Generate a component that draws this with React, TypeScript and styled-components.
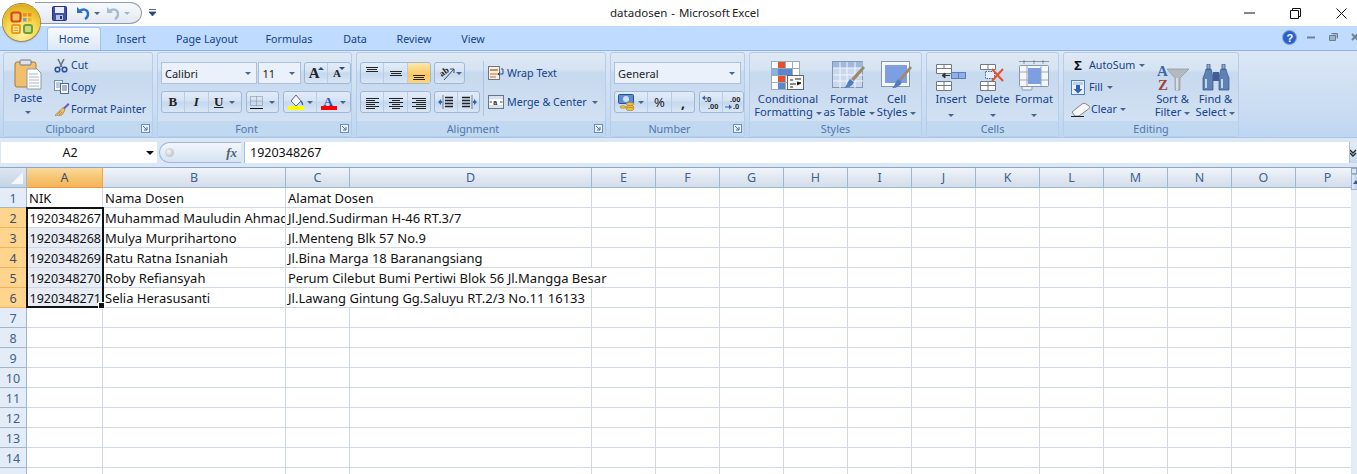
import React from 'react';
import styled, { createGlobalStyle } from 'styled-components';

const Global = createGlobalStyle`
  html, body { margin: 0; padding: 0; background: #fff; }
  body { font-family: "Noto Sans", "Open Sans", sans-serif; color: #15428b; }
`;

const Window = styled.div`
  width: 1357px;
  height: 474px;
  overflow: hidden;
  position: relative;
  background: #fff;
`;

/* title bar */
const TitleBar = styled.div`
  height: 26px;
  display: flex;
  align-items: center;
  background: #fff;
  padding-left: 35px;
`;

const Qat = styled.div`
  width: 107px;
  height: 22px;
  box-sizing: border-box;
  border: 1px solid #8e9bb0;
  border-left: none;
  border-radius: 0 12px 12px 0 / 0 11px 11px 0;
  background: linear-gradient(#f7f9fc, #e3e9f2);
  display: flex;
  align-items: center;
  padding-left: 17px;
  gap: 2px;
`;

const QatCustomize = styled.div`
  margin-left: 3px;
  width: 14px;
  display: flex;
  justify-content: center;
`;

const TitleText = styled.div`
  position: absolute;
  left: 610px;
  top: 4px;
  font-size: 11.5px;
  line-height: 18px;
  word-spacing: -1px;
  color: #222;
  white-space: pre;
`;

const WindowButtons = styled.div`
  margin-left: auto;
  margin-right: -7px;
  display: flex;
`;

const WinBtn = styled.div`
  width: 46px;
  height: 24px;
  display: flex;
  align-items: center;
  justify-content: center;
`;

const TabBtn = styled.div`
  width: 22px;
  height: 22px;
  display: flex;
  align-items: center;
  justify-content: center;
`;

const HelpWrap = styled.div`
  margin-right: 3px;
`;

const Orb = styled.div`
  position: absolute;
  z-index: 2;
  left: 3px;
  top: 4px;
  width: 37px;
  height: 37px;
  border-radius: 50%;
  background: radial-gradient(circle at 50% 78%, #fff2b0 0%, #f9d84f 45%, #e0b01e 78%, #bd911c 100%);
  box-shadow: 0 0 0 1px #a98a3a, 0 1px 2px rgba(60, 60, 60, .5);
  display: flex;
  align-items: center;
  justify-content: center;
`;

/* tabs */
const TabRow = styled.div`
  height: 24px;
  background: #bfdbff;
  display: flex;
  align-items: flex-end;
  padding-left: 47px;
  position: relative;
`;

const Tab = styled.div<{ $w: number; $active?: boolean }>`
  width: ${p => p.$w}px;
  height: 23px;
  box-sizing: border-box;
  font-size: 10.7px;
  line-height: 25px;
  text-align: center;
  color: #15428b;
  ${p => p.$active && `
    background: linear-gradient(#f6fafe, #dce8f6);
    border: 1px solid #a5c3e6;
    border-bottom: none;
    border-radius: 3px 3px 0 0;
    line-height: 23px;
  `}
`;

const TabRight = styled.div`
  position: absolute;
  right: -9px;
  top: 0;
  height: 22px;
  display: flex;
  align-items: center;
`;

/* ribbon */
const Ribbon = styled.div`
  height: 88px;
  box-sizing: border-box;
  background: linear-gradient(#dbe7f6, #c9dcf2 70%, #bed6f3);
  border-top: 1px solid #8db2e3;
  border-bottom: 1px solid #a6c9e8;
  display: flex;
  gap: 4px;
  padding: 1px 0 0 3px;
`;

const Group = styled.div<{ $w: number }>`
  width: ${p => p.$w}px;
  height: 85px;
  box-sizing: border-box;
  border: 1px solid #b5cde8;
  border-radius: 3px;
  background: linear-gradient(#dfe9f5 0%, #d6e3f2 20%, #c7d9ee 24%, #d5e4f5 100%);
  display: flex;
  flex-direction: column;
  position: relative;
`;

const GroupBody = styled.div<{ $pl?: number }>`
  height: 68px;
  display: flex;
  padding-left: ${p => p.$pl ?? 3}px;
`;

const GroupStack = styled.div`
  height: 68px;
  box-sizing: border-box;
  display: flex;
  flex-direction: column;
  gap: 7px;
  padding: 9px 0 0 3px;
`;

const GroupLabel = styled.div<{ $launcher?: boolean }>`
  height: 15px;
  background: #c1d8f1;
  font-size: 10.8px;
  line-height: 15px;
  text-align: center;
  color: #4f77ab;
  border-radius: 0 0 3px 3px;
  padding-right: ${p => p.$launcher ? 16 : 0}px;
`;

const Launcher = styled.div`
  position: absolute;
  right: 2px;
  bottom: 3px;
  width: 9px;
  height: 9px;
  box-sizing: border-box;
  border: 1px solid #6f8fb8;
  background: #e8f0fa;
  display: flex;
`;

const BigButton = styled.div<{ $w: number; $pt?: number }>`
  width: ${p => p.$w}px;
  padding-top: ${p => p.$pt ?? 0}px;
  display: flex;
  flex-direction: column;
  align-items: center;
  font-size: 11.2px;
  line-height: 13px;
  color: #15428b;
  text-align: center;
  white-space: nowrap;
`;

const BigIcon = styled.div<{ $h?: number }>`
  height: ${p => p.$h ?? 38}px;
  display: flex;
  align-items: flex-end;
  justify-content: center;
  margin-bottom: 1px;
`;

const Col = styled.div<{ $gap?: number; $pt?: number; $w?: number; $ml?: number }>`
  display: flex;
  flex-direction: column;
  gap: ${p => p.$gap ?? 0}px;
  padding-top: ${p => p.$pt ?? 0}px;
  margin-left: ${p => p.$ml ?? 0}px;
  ${p => p.$w ? `width: ${p.$w}px;` : ''}
`;

const Row = styled.div<{ $gap?: number; $ml?: number }>`
  display: flex;
  align-items: center;
  gap: ${p => p.$gap ?? 0}px;
  margin-left: ${p => p.$ml ?? 0}px;
`;

const SmallItem = styled.div<{ $gap?: number }>`
  height: 22px;
  display: flex;
  align-items: center;
  gap: ${p => p.$gap ?? 3}px;
  font-size: 10.7px;
  color: #15428b;
  white-space: nowrap;
`;

const SigmaGlyph = styled.span`
  width: 14px;
  color: #111;
  font-weight: 700;
  font-size: 13px;
  text-align: center;
`;

const Combo = styled.div<{ $w: number }>`
  width: ${p => p.$w}px;
  height: 22px;
  box-sizing: border-box;
  background: #eaf1fa;
  border: 1px solid #abc1de;
  display: flex;
  align-items: center;
  justify-content: space-between;
  padding: 0 5px 0 3px;
  font-size: 11px;
  color: #222;
`;

const BtnGroup = styled.div<{ $ml?: number }>`
  height: 22px;
  box-sizing: border-box;
  display: flex;
  margin-left: ${p => p.$ml ?? 0}px;
  border: 1px solid #9fb8d8;
  border-radius: 3px;
  background: linear-gradient(#e3edf9, #d4e2f3 45%, #c5d8ee 50%, #d9e6f6);
  overflow: hidden;
`;

const Seg = styled.div<{ $w: number; $on?: boolean; $sep?: boolean; $gap?: number }>`
  width: ${p => p.$w}px;
  display: flex;
  align-items: center;
  justify-content: center;
  gap: ${p => p.$gap ?? 3}px;
  font-size: 13px;
  color: #222;
  ${p => p.$sep && 'border-left: 1px solid #b9cde6;'}
  ${p => p.$on && 'background: linear-gradient(#fde7ab, #fbc85e 60%, #fdd67d);'}
`;

const SerifGlyph = styled.span<{ $size: number; $italic?: boolean; $under?: boolean }>`
  font-family: "Liberation Serif", serif;
  font-weight: 700;
  font-size: ${p => p.$size}px;
  ${p => p.$italic ? 'font-style: italic;' : ''}
  ${p => p.$under ? 'text-decoration: underline;' : ''}
`;

const MiniTriangle = styled.span<{ $down?: boolean }>`
  align-self: flex-start;
  margin: 4px 0 0 -2px;
  width: 0;
  height: 0;
  border-left: 3px solid transparent;
  border-right: 3px solid transparent;
  ${p => p.$down ? 'border-top: 3px solid #2c4a78;' : 'border-bottom: 3px solid #2c4a78;'}
`;

const BoldMark = styled.span<{ $size: number }>`
  font-weight: 700;
  font-size: ${p => p.$size}px;
`;

const VSep = styled.div`
  width: 1px;
  height: 55px;
  margin: 8px 4px 0 3px;
  background: #aec4df;
`;

const Caret = styled.span<{ $c?: string; $mt?: number; $ml?: number }>`
  display: inline-block;
  width: 0;
  height: 0;
  border-left: 3px solid transparent;
  border-right: 3px solid transparent;
  border-top: 3px solid ${p => p.$c ?? '#46648c'};
  vertical-align: middle;
  margin-top: ${p => p.$mt ?? 0}px;
  margin-left: ${p => p.$ml ?? 0}px;
`;

/* formula bar */
const FormulaBar = styled.div`
  height: 30px;
  box-sizing: border-box;
  background: #dbe7f5;
  border-bottom: 1px solid #8aa7c6;
  padding: 4px 0 4px 0;
  display: flex;
  align-items: stretch;
`;

const NameBox = styled.div`
  width: 156px;
  margin-left: 1px;
  background: #fff;
  position: relative;
  font-size: 12.5px;
  line-height: 22px;
  color: #111;
  text-align: center;
  padding-right: 18px;
  box-sizing: border-box;
`;

const NameCaret = styled.div`
  position: absolute;
  right: 3px;
  top: 9px;
  width: 0;
  height: 0;
  border-left: 4px solid transparent;
  border-right: 4px solid transparent;
  border-top: 4px solid #111;
`;

const FxBox = styled.div`
  width: 82px;
  margin-left: 2px;
  border-radius: 11px 0 0 11px;
  border: 1px solid #9db7d6;
  border-right: none;
  background: linear-gradient(#f2f6fb, #d5e3f3);
  display: flex;
  align-items: center;
  justify-content: space-between;
  padding: 0 4px 0 5px;
  box-sizing: border-box;
`;

const FxDot = styled.div`
  width: 9px;
  height: 9px;
  border-radius: 50%;
  background: radial-gradient(circle at 40% 40%, #f4f4f4, #a9b1bb);
`;

const FxLabel = styled.div`
  font-family: "Liberation Serif", serif;
  font-style: italic;
  font-weight: 700;
  font-size: 13px;
  color: #55606c;
`;

const FormulaInput = styled.div`
  flex: 1;
  margin-left: 3px;
  background: #fff;
  border: 1px solid #a8bfd9;
  border-width: 0 1px;
  font-size: 12.5px;
  line-height: 22px;
  color: #111;
  padding-left: 5px;
`;

const FormulaExpand = styled.div`
  width: 7px;
  background: linear-gradient(#e3edf8, #c6d8ee);
  overflow: hidden;
  display: flex;
  align-items: center;
`;

/* sheet */
const SheetArea = styled.div`
  display: flex;
  height: 306px;
`;

const Sheet = styled.div`
  width: 1351px;
  overflow: hidden;
  display: grid;
  grid-template-columns: 27px 76px 183px 64px 242px repeat(12, 64px);
  grid-template-rows: 20px;
  grid-auto-rows: 20px;
  position: relative;
  background: #fff;
`;

const Corner = styled.div`
  background: linear-gradient(#dde6f1, #c3d3e6);
  border-right: 1px solid #9eb6ce;
  border-bottom: 1px solid #9eb6ce;
  box-sizing: border-box;
  position: relative;
`;

const CornerMark = styled.div`
  position: absolute;
  right: 3px;
  bottom: 3px;
  width: 0;
  height: 0;
  border-left: 12px solid transparent;
  border-bottom: 12px solid #f5f8fb;
`;

const ColHead = styled.div<{ $on?: boolean }>`
  box-sizing: border-box;
  background: ${p => p.$on
    ? 'linear-gradient(#f9d99f, #f7c572 50%, #f4b45a)'
    : 'linear-gradient(#f1f5fa, #dfe7f1 55%, #d3deeb)'};
  border-right: 1px solid ${p => p.$on ? '#f2a83f' : '#9eb6ce'};
  border-bottom: 1px solid ${p => p.$on ? '#f29536' : '#9eb6ce'};
  font-size: 12.5px;
  line-height: 20px;
  text-align: center;
  color: ${p => p.$on ? '#3a4f6c' : '#3f628e'};
`;

const RowHead = styled.div<{ $on?: boolean }>`
  box-sizing: border-box;
  background: ${p => p.$on ? '#ffd58d' : '#e4ecf7'};
  border-right: 1px solid ${p => p.$on ? '#f29536' : '#9eb6ce'};
  border-bottom: 1px solid ${p => p.$on ? '#f2b45f' : '#9eb6ce'};
  font-size: 12.5px;
  line-height: 21px;
  text-align: center;
  color: ${p => p.$on ? '#3a4f6c' : '#3f628e'};
`;

const Cell = styled.div<{ $num?: boolean; $span?: number; $sel?: boolean }>`
  box-sizing: border-box;
  border-right: 1px solid #d0d7e5;
  border-bottom: 1px solid #d0d7e5;
  font-size: ${p => p.$num ? 12.5 : 13}px;
  line-height: 21px;
  color: #111;
  padding: 0 ${p => p.$num ? 1 : 0}px 0 2px;
  white-space: nowrap;
  overflow: hidden;
  text-align: ${p => p.$num ? 'right' : 'left'};
  ${p => p.$span ? `grid-column: span ${p.$span};` : ''}
  ${p => p.$sel ? 'background: #e8ecf5;' : ''}
`;

const Selection = styled.div`
  position: absolute;
  left: 26px;
  top: 39px;
  width: 78px;
  height: 101px;
  box-sizing: border-box;
  border: 2px solid #111;
  pointer-events: none;
`;

const FillHandle = styled.div`
  position: absolute;
  right: -3px;
  bottom: -3px;
  width: 5px;
  height: 5px;
  background: #111;
  border: 1px solid #fff;
`;

const ScrollTrack = styled.div`
  width: 6px;
  background: #e3edf8;
  overflow: hidden;
  display: flex;
  flex-direction: column;
`;

const ScrollSplit = styled.div`
  height: 6px;
  background: #dbe6f3;
  border: 1px solid #8fa8c6;
  box-sizing: border-box;
`;

const ScrollBtn = styled.div`
  height: 16px;
  background: linear-gradient(90deg, #dfe9f6, #bcd0e8);
  border: 1px solid #9db7d6;
  border-right: none;
  box-sizing: border-box;
  display: flex;
  align-items: center;
  padding-left: 1px;
`;

const ScrollUp = styled.div`
  width: 0;
  height: 0;
  border-left: 3px solid transparent;
  border-right: 3px solid transparent;
  border-bottom: 4px solid #3e5a80;
`;

/* icons */
const SvgBox = styled.svg`
  display: block;
  flex: none;
`;

const Svg = ({ w, h, children }: { w: number; h: number; children: React.ReactNode }) => (
  <SvgBox width={w} height={h} viewBox={`0 0 ${w} ${h}`}>{children}</SvgBox>
);

const OfficeLogo = () => (
  <Svg w={24} h={24}>
    <rect x="1.5" y="1.500" width="9" height="9" rx="2" fill="#f6c35a" stroke="#d9481c" strokeWidth="2.2" />
    <rect x="13" y="2" width="3.500" height="3.500" fill="#ef8a1f" />
    <rect x="18" y="2" width="3.500" height="3.500" fill="#ef8a1f" />
    <rect x="13" y="7" width="3.500" height="3.500" fill="#6f9bd8" />
    <rect x="18" y="7" width="3.500" height="3.500" fill="#f2b12e" />
    <rect x="2" y="14" width="8" height="8" rx="1" fill="#fbe39a" stroke="#ee9a1c" strokeWidth="2" />
    <path d="M4 17h4M4 19.500h4" stroke="#ee9a1c" />
    <rect x="14" y="14" width="8" height="8" rx="2" fill="#c3db8a" stroke="#6fa02f" strokeWidth="2" />
  </Svg>
);

const SaveIcon = () => (
  <Svg w={15} h={15}>
    <rect x=".5" y=".5" width="14" height="14" rx="1" fill="#3f52a5" stroke="#27337a" />
    <rect x="3" y="1" width="9" height="6" fill="#e8eefb" />
    <rect x="4" y="9" width="7" height="5" fill="#b9c3e2" />
    <rect x="8" y="10" width="2" height="3" fill="#27337a" />
  </Svg>
);

const UndoIcon = ({ off }: { off?: boolean }) => {
  const c = off ? '#a5bcd0' : '#2e6fc4';
  return (
    <Svg w={14} h={14}>
      <path d="M1 1v6h6" fill={c} />
      <path d="M3 6c3-4 9-3 9 2 0 2-1 4-3 5" fill="none" stroke={c} strokeWidth="2.4" />
    </Svg>
  );
};

const PasteIcon = () => (
  <Svg w={28} h={31}>
    <rect x="1" y="3" width="21" height="25" rx="2" fill="#f2bf6c" stroke="#a67a3c" />
    <rect x="6" y="1" width="11" height="5" rx="1" fill="#dfe4ea" stroke="#707a86" />
    <path d="M13 10h10l4 4v16H13z" fill="#fff" stroke="#8d99a8" />
    <path d="M15 15h9M15 18h10M15 21h10M15 24h10M15 27h10" stroke="#a9b6c5" />
  </Svg>
);

const CutIcon = () => (
  <Svg w={14} h={15}>
    <path d="M4 1l4 8M10 1L6 9" stroke="#6b7583" strokeWidth="1.6" />
    <circle cx="3.5" cy="11.5" r="2.3" fill="none" stroke="#2c4f9c" strokeWidth="1.6" />
    <circle cx="10.5" cy="11.5" r="2.3" fill="none" stroke="#2c4f9c" strokeWidth="1.6" />
  </Svg>
);

const CopyIcon = () => (
  <Svg w={15} h={14}>
    <rect x=".5" y=".5" width="8" height="10" fill="#fff" stroke="#6f8fb8" />
    <path d="M2 3h5M2 5h5M2 7h5" stroke="#7e93b0" />
    <rect x="6.5" y="3.5" width="8" height="10" fill="#fff" stroke="#4a6a9a" />
    <path d="M8 6h5M8 8h5M8 10h5" stroke="#4a6a9a" />
  </Svg>
);

const BrushIcon = () => (
  <Svg w={16} h={14}>
    <path d="M9 6l5-5 1.5 1.5-5 5z" fill="#6a5acd" />
    <path d="M9 5.5L11 8l-3 5c-2 .8-5 1-7 .4C3 12 5 9 9 5.5z" fill="#e9c36c" stroke="#a67e2c" strokeWidth=".7" />
    <path d="M3 12.5L7 9M5 13l3-3" stroke="#a67e2c" strokeWidth=".7" />
  </Svg>
);

const Lines = ({ a }: { a: 'l' | 'c' | 'r' | 't' | 'm' | 'b' }) => {
  const rows: [number, number, number][] = a === 'l'
    ? [[2, 15, 3], [2, 11, 5], [2, 15, 7], [2, 11, 9], [2, 15, 11], [2, 11, 13]]
    : a === 'c'
      ? [[1, 15, 3], [4, 12, 5], [1, 15, 7], [4, 12, 9], [1, 15, 11], [4, 12, 13]]
      : a === 'r'
        ? [[1, 15, 3], [5, 15, 5], [1, 15, 7], [5, 15, 9], [1, 15, 11], [5, 15, 13]]
        : a === 't'
          ? [[2, 14, 1], [3, 13, 3], [2, 14, 5]]
          : a === 'm'
            ? [[2, 14, 5], [3, 13, 7], [2, 14, 9]]
            : [[2, 14, 9], [3, 13, 11], [2, 14, 13]];
  return (
    <Svg w={16} h={15}>
      {rows.map((r, i) => <path key={i} d={`M${r[0]} ${r[2] + .5}H${r[1]}`} stroke="#222" />)}
    </Svg>
  );
};

const IndentIcon = ({ flip }: { flip?: boolean }) => (
  <Svg w={16} h={15}>
    <g transform={flip ? 'translate(16 0) scale(-1 1)' : undefined}>
      <path d="M7 2.5h8M7 5.5h8M7 8.5h8M7 11.5h8" stroke="#222" strokeWidth="1.4" />
      <path d="M5 .5v14" stroke="#222" strokeDasharray="1 1" />
      <path d="M0 7l3-3v2h1v2H3v2z" fill="#2f63b4" />
    </g>
  </Svg>
);

const TextAngle = () => (
  <Svg w={18} h={16}>
    <text x="2" y="10" fontSize="9" fontWeight="700" fontFamily="Liberation Serif" fill="#222" transform="rotate(-35 6 8)">ab</text>
    <path d="M6 15L16 4M16 4h-4M16 4v4" stroke="#444" fill="none" />
  </Svg>
);

const WrapIcon = () => (
  <Svg w={16} h={14}>
    <rect x=".5" y=".5" width="11" height="13" fill="#f8f2e4" stroke="#6b7583" />
    <path d="M2 4h8" stroke="#c26a2a" strokeWidth="1.5" />
    <path d="M2 8h8M2 11h6" stroke="#c26a2a" />
    <path d="M13 3h2v5h-4M12 6l-2 2 2 2" fill="none" stroke="#2f4f80" />
  </Svg>
);

const MergeIcon = () => (
  <Svg w={16} h={14}>
    <rect x=".5" y=".5" width="15" height="13" fill="#d7e2f0" stroke="#6b7583" />
    <rect x="1" y="4" width="14" height="6" fill="#fff" />
    <text x="5.2" y="9.5" fontSize="7" fontWeight="700" fill="#222" fontFamily="Liberation Sans">a</text>
    <path d="M1.5 7H4M14.5 7H12" stroke="#2f4f80" />
  </Svg>
);

const CurrencyIcon = () => (
  <Svg w={17} h={17}>
    <rect x=".5" y=".5" width="15" height="9" rx="1" fill="#5b8fd0" stroke="#2c4f9c" />
    <ellipse cx="8" cy="5" rx="3" ry="3" fill="#cfe0f5" />
    <ellipse cx="12" cy="10" rx="4" ry="1.6" fill="#f0bf3e" stroke="#a67e2c" strokeWidth=".6" />
    <ellipse cx="12" cy="13" rx="4" ry="1.6" fill="#f0bf3e" stroke="#a67e2c" strokeWidth=".6" />
    <ellipse cx="12" cy="15" rx="4" ry="1.6" fill="#f0bf3e" stroke="#a67e2c" strokeWidth=".6" />
    <ellipse cx="5" cy="13" rx="3" ry="1.3" fill="#f0bf3e" stroke="#a67e2c" strokeWidth=".6" />
  </Svg>
);

const DecimalIcon = ({ more }: { more?: boolean }) => (
  <Svg w={18} h={15}>
    <text x={more ? 3 : 6} y="6.5" fontSize="7.5" fontWeight="700" fill="#222" fontFamily="Liberation Sans">{more ? '.0' : '.00'}</text>
    <text x={more ? 6 : 9} y="14" fontSize="7.5" fontWeight="700" fill="#222" fontFamily="Liberation Sans">{more ? '.00' : '.0'}</text>
    <path d={more ? 'M0 3l3-2.5v5z' : 'M8 12l-3-2.5v5z'} fill="#2f63b4" />
    <path d={more ? 'M3 3h2' : 'M1 12h4'} stroke="#2f63b4" />
  </Svg>
);

const GridBase = ({ x, y, c, r, s, stroke }: { x: number; y: number; c: number; r: number; s: number; stroke: string }) => (
  <g>
    {Array.from({ length: c * r }).map((_, i) => (
      <rect key={i} x={x + (i % c) * s + .5} y={y + Math.floor(i / c) * s + .5} width={s} height={s} fill="#fff" stroke={stroke} />
    ))}
  </g>
);

const CondIcon = () => (
  <Svg w={34} h={30}>
    <GridBase x={0} y={0} c={4} r={4} s={7} stroke="#9aa9bc" />
    <rect x="7" y="1" width="7" height="6" fill="#e8502a" />
    <rect x="1" y="8" width="6" height="6" fill="#8db0e0" />
    <rect x="7" y="8" width="14" height="6" fill="#5b86d0" />
    <rect x="7" y="15" width="7" height="6" fill="#e8502a" />
    <rect x="7" y="22" width="7" height="6" fill="#5b86d0" />
    <rect x="16.5" y="14.5" width="16" height="14" fill="#f6f6f4" stroke="#5d6670" />
    <path d="M19 19h3M24 18h6M19 23h6M26 21l4 1-4 2M19 26h3" stroke="#222" />
  </Svg>
);

const TableIcon = () => (
  <Svg w={34} h={30}>
    <rect x=".5" y=".5" width="30" height="26" fill="#c9d8ef" stroke="#8897ab" />
    <rect x="1" y="1" width="30" height="6" fill="#9fb8de" />
    <path d="M8 1v26M15 1v26M23 1v26M1 7h30M1 14h30M1 20h30" stroke="#f3f6fb" />
    <path d="M19 18L31 5l2 2-11 13z" fill="#9a8b6a" />
    <path d="M18 18l4 3c-2 4-5 6-10 6 3-2 3-6 6-9z" fill="#4f7fc0" />
  </Svg>
);

const CellStylesIcon = () => (
  <Svg w={32} h={30}>
    <rect x=".5" y=".5" width="28" height="25" fill="#f5f7fb" stroke="#8897ab" />
    <rect x="4" y="4" width="22" height="18" fill="#7d9fe2" />
    <path d="M18 18L29 5l2 2-11 13z" fill="#9a8b6a" />
    <path d="M17 18l4 3c-2 4-5 6-10 6 3-2 3-6 6-9z" fill="#4f7fc0" />
  </Svg>
);

const InsertIcon = () => (
  <Svg w={30} h={27}>
    <path d="M.5 .5h15v9H.5zM.5 4.5h15M8 .5v4" fill="#fff" stroke="#6e7a89" />
    <path d="M.5 17.5h15v9H.5zM.5 21.5h15M8 17.5v9" fill="#fff" stroke="#6e7a89" />
    <rect x="15.5" y="8.5" width="14" height="6" fill="#8fb0e4" stroke="#5c7eb8" />
    <path d="M22.5 8.5v6" stroke="#5c7eb8" />
    <path d="M6 11.5h8M6 11.5l3-2.5v5z" stroke="#333" fill="#333" />
  </Svg>
);

const DeleteIcon = () => (
  <Svg w={26} h={27}>
    <path d="M.5 .5h15v5H.5zM8 .5v5M.5 17.5h15v9H.5zM.5 21.5h15M8 17.5v9" fill="#fff" stroke="#6e7a89" />
    <rect x="5.5" y="7.5" width="9" height="7" fill="#e6eefa" stroke="#3f6db5" strokeDasharray="1.5 1" />
    <path d="M12 5l11 12M23 5L12 17" stroke="#e8502a" strokeWidth="2" />
  </Svg>
);

const FormatIcon = () => (
  <Svg w={30} h={31}>
    <path d="M.5 1.5h29M5 .5v3M24 .5v3M15 .5v3" stroke="#444" strokeDasharray="1 1" />
    <rect x=".5" y="5.5" width="29" height="21" rx="1" fill="#f4f6fa" stroke="#8897ab" />
    <path d="M8 5v21M22 5v21M1 12h28M1 20h28" stroke="#9aa9bc" />
    <rect x="9" y="8" width="13" height="16" fill="#7d9fe2" />
    <rect x="3" y="26.5" width="10" height="3.5" rx="1" fill="#eef1f6" stroke="#8897ab" />
  </Svg>
);

const FillDownIcon = () => (
  <Svg w={14} h={15}>
    <rect x=".5" y=".5" width="13" height="14" fill="#eaf1fb" stroke="#4f7fc0" />
    <rect x="2" y="2" width="10" height="3" fill="#bcd0ec" />
    <path d="M5 5h4v4h2.5L7 13.5 2.5 9H5z" fill="#2f63b4" />
  </Svg>
);

const EraserIcon = () => (
  <Svg w={20} h={15}>
    <path d="M1 10L11 2c1-1 3-1 4 0l3 2c1 1 .5 2-.5 3L8 14H4z" fill="#f6f7f8" stroke="#7d8792" />
    <path d="M0 14.5h13" stroke="#222" />
  </Svg>
);

const SortIcon = () => (
  <Svg w={32} h={28}>
    <text x="0" y="13" fontSize="15" fontWeight="700" fontFamily="Liberation Serif" fill="#3c66b0">A</text>
    <text x="1" y="27" fontSize="15" fontWeight="700" fontFamily="Liberation Serif" fill="#a3403a">Z</text>
    <path d="M10 6h22l-9 9v12h-5V15z" fill="#b4babf" stroke="#848c94" strokeWidth=".6" />
    <path d="M20 15v12" stroke="#e8ebee" strokeWidth="1.5" />
  </Svg>
);

const FindIcon = () => (
  <Svg w={28} h={27}>
    <path d="M3 9l1-4h5l1 4 1 5v12H1V14z" fill="#5f82b4" stroke="#34517f" strokeWidth=".7" />
    <path d="M18 9l1-4h5l1 4 2 5v12H17V14z" fill="#5f82b4" stroke="#34517f" strokeWidth=".7" />
    <path d="M5 0h3v5H5zM20 0h3v5h-3z" fill="#8da9cf" stroke="#34517f" strokeWidth=".7" />
    <rect x="11" y="8" width="6" height="9" fill="#3e5f90" />
    <path d="M4 15v9M20 15v9" stroke="#c6d6ea" strokeWidth="2" />
  </Svg>
);

const HelpIcon = () => (
  <Svg w={15} h={15}>
    <circle cx="7.5" cy="7.5" r="7" fill="#2a62c9" stroke="#7fa6e0" />
    <text x="4.5" y="11.5" fontSize="11" fontWeight="700" fontFamily="Liberation Sans" fill="#fff">?</text>
  </Svg>
);

const LaunchMark = () => (
  <Svg w={7} h={7}>
    <path d="M1 1l4 4M5 2v3H2" fill="none" stroke="#4f6f9c" />
  </Svg>
);

const columns = ['A', 'B', 'C', 'D', 'E', 'F', 'G', 'H', 'I', 'J', 'K', 'L', 'M', 'N', 'O', 'P'];

const people = [
  ['1920348267', 'Muhammad Mauludin Ahmad', 'Jl.Jend.Sudirman H-46 RT.3/7', 2],
  ['1920348268', 'Mulya Murprihartono', 'Jl.Menteng Blk 57 No.9', 2],
  ['1920348269', 'Ratu Ratna Isnaniah', 'Jl.Bina Marga 18 Baranangsiang', 2],
  ['1920348270', 'Roby Refiansyah', 'Perum Cilebut Bumi Pertiwi Blok 56 Jl.Mangga Besar', 3],
  ['1920348271', 'Selia Herasusanti', 'Jl.Lawang Gintung Gg.Saluyu RT.2/3 No.11 16133', 2],
] as const;

const EmptyCells = ({ n }: { n: number }) => (
  <>{Array.from({ length: n }).map((_, i) => <Cell key={i} />)}</>
);

export default function App() {
  return (
    <Window>
      <Global />
      <Orb><OfficeLogo /></Orb>
      <TitleBar>
        <Qat>
          <SaveIcon />
          <Row $gap={4} $ml={7}><UndoIcon /><Caret /></Row>
          <Row $gap={4} $ml={4}><UndoIcon off /><Caret $c="#a5b4c6" /></Row>
        </Qat>
        <QatCustomize>
          <Svg w={7} h={8}><path d="M0 .5h7M0 3h7L3.5 7z" stroke="#2c4a78" fill="#2c4a78" strokeWidth=".8" /></Svg>
        </QatCustomize>
        <TitleText>datadosen  -  Microsoft Excel</TitleText>
        <WindowButtons>
          <WinBtn><Svg w={11} h={2}><path d="M0 1h11" stroke="#111" /></Svg></WinBtn>
          <WinBtn><Svg w={11} h={11}><path d="M.5 2.5h8v8h-8zM2.5 2.5v-2h8v8h-2" fill="none" stroke="#111" /></Svg></WinBtn>
          <WinBtn><Svg w={11} h={11}><path d="M.5 .5l10 10M10.5 .5l-10 10" stroke="#111" /></Svg></WinBtn>
        </WindowButtons>
      </TitleBar>

      <TabRow>
        <Tab $w={54} $active>Home</Tab>
        <Tab $w={60}>Insert</Tab>
        <Tab $w={92}>Page Layout</Tab>
        <Tab $w={72}>Formulas</Tab>
        <Tab $w={60}>Data</Tab>
        <Tab $w={58}>Review</Tab>
        <Tab $w={60}>View</Tab>
        <TabRight>
          <HelpWrap><HelpIcon /></HelpWrap>
          <TabBtn><Svg w={8} h={3}><path d="M0 1.5h8" stroke="#6e7f94" strokeWidth="2" /></Svg></TabBtn>
          <TabBtn><Svg w={9} h={8}><path d="M.5 2.5h6v5h-6zM2.5 .5h6v5" fill="#9fb2c9" stroke="#6e7f94" /></Svg></TabBtn>
          <TabBtn><Svg w={8} h={8}><path d="M1 1l6 6M7 1L1 7" stroke="#6e7f94" strokeWidth="2" /></Svg></TabBtn>
        </TabRight>
      </TabRow>

      <Ribbon>
        <Group $w={150}>
          <GroupBody>
            <BigButton $w={42} $pt={4}>
              <BigIcon $h={33}><PasteIcon /></BigIcon>
              <span>Paste</span>
              <Caret $mt={7} />
            </BigButton>
            <Col $pt={1} $ml={5}>
              <SmallItem><CutIcon />Cut</SmallItem>
              <SmallItem $gap={2}><CopyIcon />Copy</SmallItem>
              <SmallItem $gap={1}><BrushIcon />Format Painter</SmallItem>
            </Col>
          </GroupBody>
          <GroupLabel $launcher>Clipboard</GroupLabel>
          <Launcher><LaunchMark /></Launcher>
        </Group>

        <Group $w={195}>
          <GroupStack>
            <Row $gap={1}>
              <Combo $w={97}>Calibri<Caret /></Combo>
              <Combo $w={43}>11<Caret /></Combo>
              <BtnGroup $ml={2}>
                <Seg $w={22} $gap={0}><SerifGlyph $size={15}>A</SerifGlyph><MiniTriangle /></Seg>
                <Seg $w={22} $sep $gap={0}><SerifGlyph $size={11}>A</SerifGlyph><MiniTriangle $down /></Seg>
              </BtnGroup>
            </Row>
            <Row $gap={4}>
              <BtnGroup>
                <Seg $w={22}><SerifGlyph $size={13}>B</SerifGlyph></Seg>
                <Seg $w={23} $sep><SerifGlyph $size={13} $italic>I</SerifGlyph></Seg>
                <Seg $w={32} $sep $gap={6}><SerifGlyph $size={13} $under>U</SerifGlyph><Caret /></Seg>
              </BtnGroup>
              <BtnGroup>
                <Seg $w={32} $gap={6}>
                  <Svg w={13} h={13}><path d="M.5 .5h12v9H.5zM6.5 .5v9M.5 5h12" fill="none" stroke="#7a8797" strokeDasharray="1 1" /><path d="M0 12.5h13" stroke="#111" /></Svg>
                  <Caret />
                </Seg>
              </BtnGroup>
              <BtnGroup>
                <Seg $w={32}>
                  <Svg w={16} h={16}><path d="M8 1l5 6-5 5-5-5z" fill="#f4f6fa" stroke="#5c6a7c" /><path d="M13 7c1 2 2 3 1.5 4" stroke="#3c66b0" fill="none" strokeWidth="1.5" /><rect y="12" width="16" height="4" fill="#ffff00" /></Svg>
                  <Caret />
                </Seg>
                <Seg $w={33} $sep>
                  <Svg w={16} h={16}><text x="2.5" y="11.5" fontSize="13" fontWeight="700" fontFamily="Liberation Serif" fill="#2c4f9c">A</text><rect y="12" width="16" height="4" fill="#ff0000" /></Svg>
                  <Caret />
                </Seg>
              </BtnGroup>
            </Row>
          </GroupStack>
          <GroupLabel $launcher>Font</GroupLabel>
          <Launcher><LaunchMark /></Launcher>
        </Group>

        <Group $w={250}>
          <GroupBody>
            <Col $pt={9} $gap={7}>
              <Row $gap={3}>
                <BtnGroup>
                  <Seg $w={22}><Lines a="t" /></Seg>
                  <Seg $w={23} $sep><Lines a="m" /></Seg>
                  <Seg $w={22} $sep $on><Lines a="b" /></Seg>
                </BtnGroup>
                <BtnGroup>
                  <Seg $w={29} $gap={0}><TextAngle /><Caret /></Seg>
                </BtnGroup>
              </Row>
              <Row $gap={3}>
                <BtnGroup>
                  <Seg $w={22}><Lines a="l" /></Seg>
                  <Seg $w={23} $sep><Lines a="c" /></Seg>
                  <Seg $w={22} $sep><Lines a="r" /></Seg>
                </BtnGroup>
                <BtnGroup>
                  <Seg $w={22}><IndentIcon /></Seg>
                  <Seg $w={21} $sep><IndentIcon flip /></Seg>
                </BtnGroup>
              </Row>
            </Col>
            <VSep />
            <Col $pt={9} $gap={7}>
              <SmallItem><WrapIcon />Wrap Text</SmallItem>
              <SmallItem><MergeIcon />Merge &amp; Center <Caret $ml={2} /></SmallItem>
            </Col>
          </GroupBody>
          <GroupLabel $launcher>Alignment</GroupLabel>
          <Launcher><LaunchMark /></Launcher>
        </Group>

        <Group $w={135}>
          <GroupStack>
            <Combo $w={127}>General<Caret /></Combo>
            <Row $gap={4}>
              <BtnGroup>
                <Seg $w={32}><CurrencyIcon /><Caret /></Seg>
                <Seg $w={23} $sep>%</Seg>
                <Seg $w={22} $sep><BoldMark $size={14}>,</BoldMark></Seg>
              </BtnGroup>
              <BtnGroup>
                <Seg $w={22}><DecimalIcon more /></Seg>
                <Seg $w={20} $sep><DecimalIcon /></Seg>
              </BtnGroup>
            </Row>
          </GroupStack>
          <GroupLabel $launcher>Number</GroupLabel>
          <Launcher><LaunchMark /></Launcher>
        </Group>

        <Group $w={173}>
          <GroupBody $pl={2}>
            <BigButton $w={72}>
              <BigIcon><CondIcon /></BigIcon>
              <span>Conditional</span>
              <span>Formatting <Caret /></span>
            </BigButton>
            <BigButton $w={50}>
              <BigIcon><TableIcon /></BigIcon>
              <span>Format</span>
              <span>as Table <Caret /></span>
            </BigButton>
            <BigButton $w={45}>
              <BigIcon><CellStylesIcon /></BigIcon>
              <span>Cell</span>
              <span>Styles <Caret /></span>
            </BigButton>
          </GroupBody>
          <GroupLabel>Styles</GroupLabel>
        </Group>

        <Group $w={133}>
          <GroupBody $pl={3}>
            <BigButton $w={42}>
              <BigIcon><InsertIcon /></BigIcon>
              <span>Insert</span>
              <Caret $mt={9} />
            </BigButton>
            <BigButton $w={41}>
              <BigIcon><DeleteIcon /></BigIcon>
              <span>Delete</span>
              <Caret $mt={9} />
            </BigButton>
            <BigButton $w={42}>
              <BigIcon><FormatIcon /></BigIcon>
              <span>Format</span>
              <Caret $mt={9} />
            </BigButton>
          </GroupBody>
          <GroupLabel>Cells</GroupLabel>
        </Group>

        <Group $w={176}>
          <GroupBody $pl={7}>
            <Col $w={80} $pt={1}>
              <SmallItem $gap={4}><SigmaGlyph>Σ</SigmaGlyph>AutoSum <Caret /></SmallItem>
              <SmallItem $gap={4}><FillDownIcon />Fill <Caret /></SmallItem>
              <SmallItem $gap={0}><EraserIcon />Clear <Caret $ml={3} /></SmallItem>
            </Col>
            <BigButton $w={43}>
              <BigIcon><SortIcon /></BigIcon>
              <span>Sort &amp;</span>
              <span>Filter <Caret /></span>
            </BigButton>
            <BigButton $w={43}>
              <BigIcon><FindIcon /></BigIcon>
              <span>Find &amp;</span>
              <span>Select <Caret /></span>
            </BigButton>
          </GroupBody>
          <GroupLabel>Editing</GroupLabel>
        </Group>
      </Ribbon>

      <FormulaBar>
        <NameBox>A2<NameCaret /></NameBox>
        <FxBox><FxDot /><FxLabel>fx</FxLabel></FxBox>
        <FormulaInput>1920348267</FormulaInput>
        <FormulaExpand>
          <Svg w={7} h={8}><path d="M0 1l3 3 3-3M0 4l3 3 3-3" fill="none" stroke="#222" strokeWidth="1.3" /></Svg>
        </FormulaExpand>
      </FormulaBar>

      <SheetArea>
        <Sheet>
          <Corner><CornerMark /></Corner>
          {columns.map(c => <ColHead key={c} $on={c === 'A'}>{c}</ColHead>)}

          <RowHead>1</RowHead>
          <Cell>NIK</Cell>
          <Cell>Nama Dosen</Cell>
          <Cell $span={2}>Alamat Dosen</Cell>
          <EmptyCells n={12} />

          {people.map((p, i) => (
            <React.Fragment key={p[0]}>
              <RowHead $on>{i + 2}</RowHead>
              <Cell $num $sel={i > 0}>{p[0]}</Cell>
              <Cell>{p[1]}</Cell>
              <Cell $span={p[3]}>{p[2]}</Cell>
              <EmptyCells n={p[3] === 2 ? 12 : 11} />
            </React.Fragment>
          ))}

          {[7, 8, 9, 10, 11, 12, 13, 14].map(n => (
            <React.Fragment key={n}>
              <RowHead>{n}</RowHead>
              <EmptyCells n={16} />
            </React.Fragment>
          ))}
          <RowHead />
          <EmptyCells n={16} />

          <Selection><FillHandle /></Selection>
        </Sheet>
        <ScrollTrack>
          <ScrollSplit />
          <ScrollBtn><ScrollUp /></ScrollBtn>
        </ScrollTrack>
      </SheetArea>
    </Window>
  );
}
